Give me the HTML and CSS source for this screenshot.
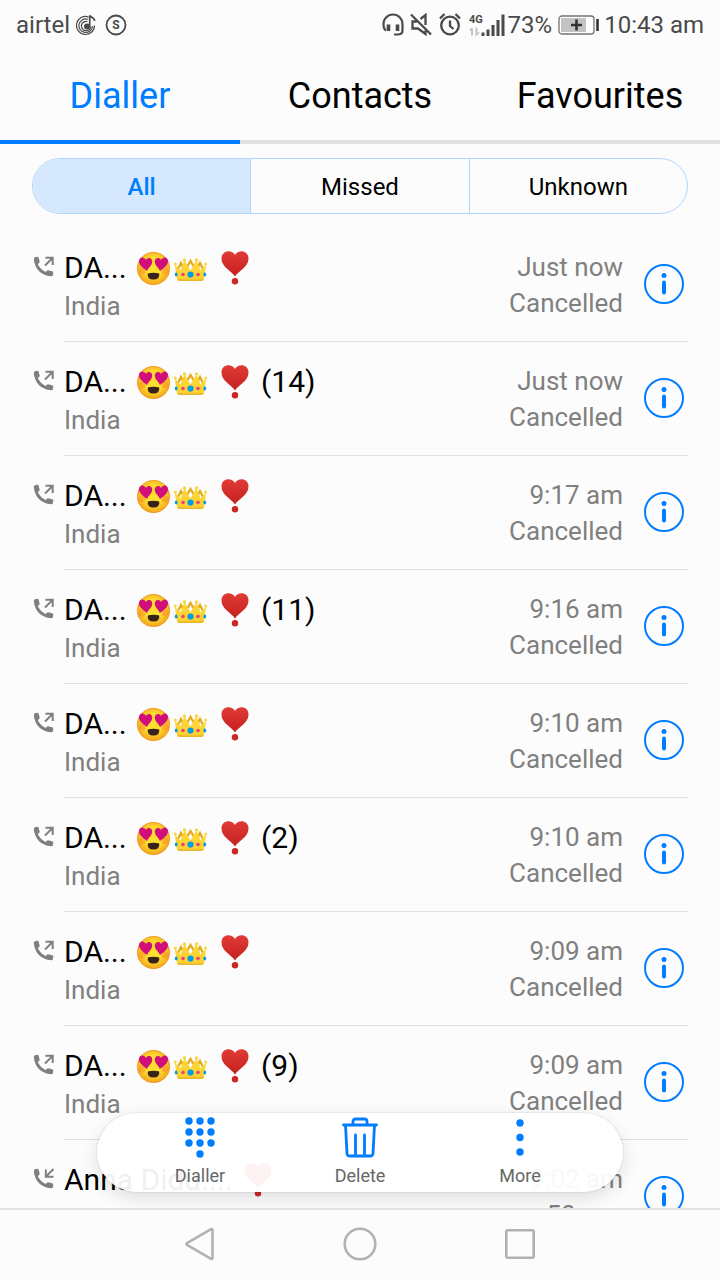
FILE: index.html
```html
<!DOCTYPE html>
<html lang="en">
<head>
<meta charset="utf-8">
<meta name="viewport" content="width=device-width, initial-scale=1">
<title>Dialler</title>
<link rel="stylesheet" href="styles.css">
</head>
<body>
<svg class="sprite" aria-hidden="true">
  <defs>
    <radialGradient id="skin" cx=".5" cy=".45" r=".55"><stop offset=".5" stop-color="#fddf30"/><stop offset="1" stop-color="#f6a51c"/></radialGradient>
    <linearGradient id="gold" x2="0" y2="1"><stop offset="0" stop-color="#fbd93a"/><stop offset="1" stop-color="#fdcf2e"/></linearGradient>
    <linearGradient id="red" x2="0" y2="1"><stop offset="0" stop-color="#e03a36"/><stop offset="1" stop-color="#c5211f"/></linearGradient>
  </defs>
  <symbol id="love" viewBox="0 0 37 36">
    <circle cx="18.500" cy="18.500" r="16.200" fill="url(#skin)" stroke="#eb9320" stroke-width=".8"/>
    <circle cx="7" cy="21" r="3.500" fill="#f5752e" opacity=".35"/><circle cx="30" cy="21" r="3.500" fill="#f5752e" opacity=".35"/>
    <path d="M12 21C8 18 3.500 15 4 10.500C4.500 6.500 9.500 6.500 11 10C13 6.500 17.500 8 17.200 12C17 15.500 13.500 17.500 12 21Z" fill="#d00f7b"/>
    <path d="M25 21C29 18 33.500 15 33 10.500C32.500 6.500 27.500 6.500 26 10C24 6.500 19.500 8 19.800 12C20 15.500 23.500 17.500 25 21Z" fill="#d00f7b"/>
    <path d="M12.800 23.500Q18.500 21.800 24.200 23.500Q25 29.500 18.500 29.500Q12 29.500 12.800 23.500Z" fill="#38221c"/>
  </symbol>
  <symbol id="crown" viewBox="0 0 37 36">
    <path d="M6 19L9 13L12 19M25 19L28 13L31 19M15 17L18.500 11L22 17" fill="none" stroke="#e5a91f" stroke-width="2.200"/>
    <path d="M5 29.500L2.800 14.500L8.500 20.500L12.500 10L18.500 20.500L24.500 10L28.500 20.500L34.200 14.500L32 29.500Q31.500 31 29 31H8Q5.500 31 5 29.500Z" fill="url(#gold)"/>
    <path d="M5.200 29Q18.500 30 31.800 29Q31.500 31 29 31H8Q5.500 31 5.200 29Z" fill="#edb52c"/>
    <g fill="#fbd63a"><circle cx="3.300" cy="14" r="1.500"/><circle cx="12.500" cy="10" r="1.700"/><circle cx="24.500" cy="10" r="1.700"/><circle cx="33.700" cy="14" r="1.500"/></g>
    <circle cx="18.500" cy="24.500" r="3.100" fill="#039be5"/><circle cx="11" cy="24.500" r="1.800" fill="#ec407a"/><circle cx="26" cy="24.500" r="1.800" fill="#ec407a"/><ellipse cx="4.200" cy="24.500" rx="1.400" ry="2" fill="#039be5"/><ellipse cx="32.800" cy="24.500" rx="1.400" ry="2" fill="#039be5"/>
  </symbol>
  <symbol id="heart" viewBox="0 0 37 36">
    <path d="M18 26.500C15 21 4.500 17.500 4.500 8.500C4.500 .5 14.500-1 18 5C21.500-1 31.500 .5 31.500 8.500C31.500 17.500 21 21 18 26.500Z" fill="url(#red)"/>
    <circle cx="18" cy="31.300" r="3.200" fill="#cb2725"/>
  </symbol>
  <symbol id="handset" viewBox="0 0 22 22">
    <path d="M2.500 1L5.200 .8C6 3 6.600 4.600 6.700 6.200L4.800 8.200C6.500 11.500 9 14 12.700 16L14.600 14.200C16.500 14.400 18.200 15 20.300 15.800L20 19Q19.700 20.200 18 20.200C8 19.500 1.500 12.500 .8 3Q.8 1.300 2.500 1Z" fill="#7f7f7f"/>
  </symbol>
  <symbol id="outgoing" viewBox="0 0 22 22"><use href="#handset"/><path d="M12 9.500L19.500 2M12.500 1.800H19.700V9" fill="none" stroke="#7f7f7f" stroke-width="2"/></symbol>
  <symbol id="incoming" viewBox="0 0 22 22"><use href="#handset"/><path d="M20.500 1L13 8.500M12.800 1.500V8.700H20.500" fill="none" stroke="#7f7f7f" stroke-width="2"/></symbol>
  <symbol id="info" viewBox="0 0 40 40"><circle cx="20" cy="20" r="19" fill="none" stroke="#007dff" stroke-width="2"/><circle cx="20" cy="11.500" r="2.500" fill="#007dff"/><path d="M20 18.500V28.500" stroke="#007dff" stroke-width="4" stroke-linecap="round"/></symbol>
</svg>

<div class="phone">
  <header class="status">
    <span>airtel</span>
    <svg class="music" width="20" height="22" viewBox="0 0 20 22" fill="none" stroke="#4a4a4a"><path d="M12.500 3A9 9 0 1 0 18.500 11.500M12 5.300A6.800 6.800 0 1 0 16.500 12M11.500 7.500A4.700 4.700 0 1 0 14.700 13" stroke-width="1.200"/><circle cx="11" cy="12.500" r="3" fill="#4a4a4a" stroke="none"/><path d="M13.700 13V1.500C15 4 19 3.500 18.500 7" stroke-width="1.700"/></svg>
    <svg class="badge-s" width="22" height="22" viewBox="0 0 22 22"><circle cx="11" cy="11" r="9.500" fill="none" stroke="#4a4a4a" stroke-width="1.800"/><text class="s-letter" x="11" y="15" text-anchor="middle">S</text></svg>
    <span class="spacer"></span>
    <svg width="22" height="24" viewBox="0 0 22 24" fill="none" stroke="#4a4a4a" stroke-width="2.200"><path d="M4 17.500Q1.500 16 1.500 11A9.300 9.300 0 0 1 20.500 11V17.500Q20.500 21.500 15.500 21.500H12"/><path d="M6.500 11.500V18M15.500 11.500V18" stroke-width="3.600"/></svg>
    <svg class="mute" width="22" height="24" viewBox="0 0 22 24" fill="none" stroke="#4a4a4a" stroke-width="2.300"><path d="M1 1.500L21 21.500M10.500 6L15.500 2V12M15.500 17.500V21L8 15.500H2.500V8.500H7"/></svg>
    <svg class="alarm" width="22" height="24" viewBox="0 0 22 24" fill="none" stroke="#4a4a4a" stroke-width="2.300"><circle cx="11" cy="12.500" r="8.800"/><path d="M11 7.500V13L14.500 16M1 5.500L5.500 1M16.500 1L21 5.500"/></svg>
    <svg class="signal" width="36" height="24" viewBox="0 0 36 24"><text class="net" x="0" y="10">4G</text><path d="M3 22.500V15.500M1 17.500L3 15M7.500 14.500V21.500L10 19.500" fill="none" stroke="#c4c4c4" stroke-width="2"/><path d="M14 19.500V23M19 16.500V23M24 12V23M29 7V23M34 1.500V23" stroke="#4a4a4a" stroke-width="3"/></svg>
    <span>73%</span>
    <svg class="battery" width="42" height="22" viewBox="0 0 42 22"><rect x="1" y="2" width="35" height="18" rx="3" fill="#fff" stroke="#737373" stroke-width="1.300"/><rect x="3" y="4" width="25" height="14" fill="#c3c3c3"/><path d="M13 11H24M18.500 5.500V16.500" stroke="#333" stroke-width="2.600"/><path d="M39.500 5V17" stroke="#333" stroke-width="2.600"/></svg>
    <span>10:43 am</span>
  </header>

  <nav class="tabs">
    <button class="tab tab-active">Dialler</button>
    <button class="tab">Contacts</button>
    <button class="tab">Favourites</button>
  </nav>

  <div class="filters">
    <button class="filter filter-active">All</button>
    <button class="filter">Missed</button>
    <button class="filter">Unknown</button>
  </div>

  <main class="calls">
    <ul class="list" id="list"></ul>
    <div class="toolbar">
      <button class="tool"><svg width="40" height="42" viewBox="0 0 40 42" fill="#007dff"><circle cx="9" cy="4" r="3.700"/><circle cx="20" cy="4" r="3.700"/><circle cx="31" cy="4" r="3.700"/><circle cx="9" cy="15" r="3.700"/><circle cx="20" cy="15" r="3.700"/><circle cx="31" cy="15" r="3.700"/><circle cx="9" cy="26" r="3.700"/><circle cx="20" cy="26" r="3.700"/><circle cx="31" cy="26" r="3.700"/><circle cx="20" cy="37" r="3.700"/></svg>Dialler</button>
      <button class="tool"><svg width="40" height="42" viewBox="0 0 40 42" fill="none" stroke="#007dff" stroke-width="2.800" stroke-linecap="round" stroke-linejoin="round"><path d="M3.500 8H36.500M13 8V4.500Q13 2 15.500 2H24.500Q27 2 27 4.500V8M5.500 8L7 36.500Q7.200 39 9.500 39H30.500Q32.800 39 33 36.500L34.500 8M15.500 18V38M24.500 18V38"/></svg>Delete</button>
      <button class="tool"><svg width="40" height="42" viewBox="0 0 40 42" fill="#007dff"><circle cx="20" cy="6" r="3.700"/><circle cx="20" cy="20.500" r="3.700"/><circle cx="20" cy="35" r="3.700"/></svg>More</button>
    </div>
  </main>

  <nav class="system">
    <button class="key" aria-label="Back"><svg width="34" height="36" viewBox="0 0 34 36"><path d="M4 17.200L28 3.200Q29.500 2.500 29.500 4V32Q29.500 33.500 28 32.800L4 18.800Q2.800 18 4 17.200Z"/></svg></button>
    <button class="key" aria-label="Home"><svg width="34" height="36" viewBox="0 0 34 36"><circle cx="17" cy="18" r="15.300"/></svg></button>
    <button class="key" aria-label="Recent apps"><svg width="34" height="36" viewBox="0 0 34 36"><rect x="3.300" y="4.300" width="27.400" height="27.400" rx="1.500"/></svg></button>
  </nav>
</div>
<script src="calls.js"></script>
</body>
</html>
```
FILE: styles.css
```css
* { box-sizing: border-box; }
body { margin: 0; background: #fcfcfc; color: #000; font-family: Roboto, "Noto Sans", sans-serif; }
button { margin: 0; padding: 0; border: 0; background: none; color: inherit; font: inherit; }
svg { display: block; flex: none; }
.sprite { position: absolute; width: 0; height: 0; }
.phone { display: flex; flex-direction: column; height: 100vh; }

.status { display: flex; align-items: center; height: 50px; padding: 0 16px; color: #4a4a4a; font-size: 24px; white-space: nowrap; }
.music { margin-left: 6px; }
.badge-s { margin-left: 9px; }
.s-letter { font: bold 12px Roboto, sans-serif; fill: #4a4a4a; }
.net { font: bold 11px Roboto, sans-serif; fill: #4a4a4a; }
.spacer { flex: 1; }
.mute { margin-left: 6px; }
.alarm { margin-left: 7px; }
.signal { margin: 0 3px 0 8px; }
.battery { margin: 0 4px 0 6px; }

.tabs { display: flex; height: 94px; }
.tab { flex: 1; padding-top: 2px; border-bottom: 4px solid #e1e1e1; font-size: 36px; }
.tab-active { border-color: #007dff; color: #007dff; }

.filters { display: flex; height: 56px; margin: 14px 32px 0; overflow: hidden; border: 1px solid #b0d6ff; border-radius: 28px; }
.filter { flex: 1; font-size: 24px; padding-top: 2px; }
.filter + .filter { border-left: 1px solid #b0d6ff; }
.filter-active { background: #d6e8fd; color: #007dff; font-weight: 500; }

.calls { position: relative; flex: 1; min-height: 0; overflow: hidden; padding: 14px 32px 0; }
.list { margin: 0; padding: 0; list-style: none; }
.call { display: grid; grid-template-columns: 32px 1fr; }
.direction { width: 22px; height: 22px; margin: 28px 0 0 1px; }
.body { display: flex; height: 114px; padding: 21px 4px 0 0; border-bottom: 1px solid #e1e1e1; }
.who { flex: 1; padding-top: 1px; }
.name { display: flex; align-items: center; height: 36px; font-size: 30px; line-height: 36px; white-space: pre; }
.emoji { width: 37px; height: 36px; }
.mark { margin-right: 1px; }
.place { margin-top: 4px; color: #808080; font-size: 26px; line-height: 32px; }
.when { margin-right: 21px; color: #808080; font-size: 26px; line-height: 36px; text-align: right; }
.info { align-self: flex-start; width: 40px; height: 40px; margin-top: 15px; }
.info svg { width: 40px; height: 40px; }

.toolbar { position: absolute; right: 97px; bottom: 16px; left: 97px; display: flex; justify-content: center; height: 79px; padding: 4px 23px 0; border-radius: 40px; background: rgba(255, 255, 255, 0.94); box-shadow: 0 0 2px rgba(0, 0, 0, 0.2), 0 6px 18px rgba(0, 0, 0, 0.12); }
.tool { display: flex; flex: 1; flex-direction: column; align-items: center; gap: 6px; color: #666; font-size: 18px; line-height: 22px; }

.system { display: flex; justify-content: center; height: 72px; padding: 0 120px 2px; border-top: 2px solid #e1e1e1; }
.key { display: flex; flex: 1; align-items: center; justify-content: center; }
.key svg { fill: none; stroke: #b2b2b2; stroke-width: 2.600; }
```
FILE: calls.js
```js
const calls = [
  { count: "", time: "Just now" },
  { count: " (14)", time: "Just now" },
  { count: "", time: "9:17 am" },
  { count: " (11)", time: "9:16 am" },
  { count: "", time: "9:10 am" },
  { count: " (2)", time: "9:10 am" },
  { count: "", time: "9:09 am" },
  { count: " (9)", time: "9:09 am" },
  { name: "Anna Didu.... ", emoji: ["heart"], count: "", time: "9:02 am", state: "50 sec", direction: "incoming" }
];

const icon = (id) => `<svg class="emoji" aria-hidden="true"><use href="#${id}"/></svg>`;

document.getElementById("list").innerHTML = calls.map((call) => {
  const name = call.name
    ? `<span>${call.name}</span>${call.emoji.map(icon).join("")}`
    : `<span class="mark">DA... </span>${icon("love")}${icon("crown")}<span> </span>${icon("heart")}`;
  return `<li class="call">
    <svg class="direction" aria-hidden="true"><use href="#${call.direction || "outgoing"}"/></svg>
    <div class="body">
      <div class="who"><div class="name">${name}<span>${call.count}</span></div><div class="place">India</div></div>
      <div class="when"><div>${call.time}</div><div>${call.state || "Cancelled"}</div></div>
      <button class="info" aria-label="Call details"><svg><use href="#info"/></svg></button>
    </div>
  </li>`;
}).join("");
```
